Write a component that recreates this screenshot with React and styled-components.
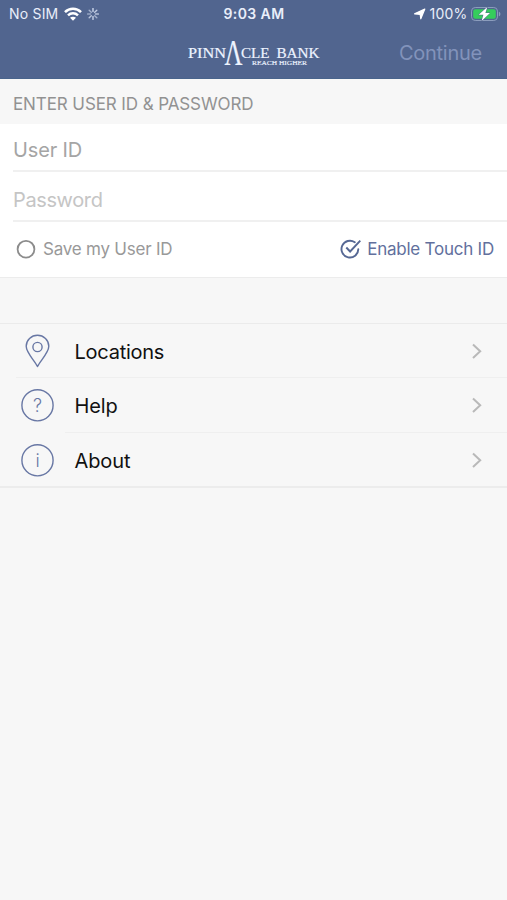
import React from "react";
import styled, { createGlobalStyle } from "styled-components";

const GlobalStyle = createGlobalStyle`
  * {
    box-sizing: border-box;
  }

  body {
    margin: 0;
    background-color: #f7f7f7;
    font-family: Inter, "Liberation Sans", sans-serif;
  }
`;

const Screen = styled.div`
  display: flex;
  flex-direction: column;
  width: 100%;
  height: 900px;
  background-color: #f7f7f7;
  overflow: hidden;
`;

const Header = styled.header`
  height: 79px;
  background-color: #51658f;
  border-bottom: 1px solid #49648c;
  color: #ffffff;
`;

const StatusBar = styled.div`
  display: grid;
  grid-template-columns: 1fr auto 1fr;
  align-items: center;
  height: 27px;
  padding: 0 6px 0 9px;
  font-size: 14px;
  line-height: 27px;
  letter-spacing: 0.2px;
  color: #e9eefa;
`;

const StatusGroup = styled.div`
  display: flex;
  align-items: center;
  justify-content: ${(props) => (props.$end ? "flex-end" : "flex-start")};
  gap: ${(props) => props.$gap};
`;

const Time = styled.span`
  margin-right: 2px;
  font-size: 14px;
  font-weight: 600;
  letter-spacing: 0.4px;
`;

const NavBar = styled.div`
  display: grid;
  grid-template-columns: 1fr auto 1fr;
  align-items: center;
  height: 51px;
  padding-right: 25px;
  padding-left: 25px;
`;

const Continue = styled.button`
  justify-self: end;
  border: 0;
  padding: 0;
  background: none;
  font-family: inherit;
  font-size: 20px;
  line-height: 24px;
  letter-spacing: ${(props) => props.$spacing};
  color: #8293bb;
`;

const SectionTitle = styled.h2`
  height: 45px;
  margin: 0;
  padding: 3px 0 0 13px;
  font-size: 17px;
  font-weight: 400;
  line-height: 44px;
  letter-spacing: -0.1px;
  color: #929292;
`;

const Form = styled.form`
  height: 154px;
  background-color: #ffffff;
  border-bottom: 1px solid #ececec;
`;

const Field = styled.label`
  display: flex;
  align-items: center;
  height: ${(props) => props.$height};
  margin-left: 13px;
  padding-top: ${(props) => props.$top};
  border-bottom: 2px solid #f0f0f0;
  font-size: 20px;
  line-height: 24px;
  letter-spacing: ${(props) => props.$spacing};
  color: ${(props) => props.$color};
`;

const Options = styled.div`
  display: flex;
  align-items: center;
  justify-content: space-between;
  height: 54px;
  padding: 0 13px 0 16px;
`;

const Option = styled.div`
  display: flex;
  align-items: center;
  gap: ${(props) => props.$gap};
  font-size: 17px;
  line-height: 20px;
  letter-spacing: ${(props) => props.$spacing};
  color: ${(props) => props.$color};
`;

const Menu = styled.nav`
  margin-top: 45px;
  border-top: 1px solid #ebebeb;
  border-bottom: 2px solid #ececec;
`;

const MenuItem = styled.div`
  display: flex;
  align-items: center;
  height: ${(props) => props.$height};
  padding: 0 25px 0 20px;
`;

const Divider = styled.div`
  height: 1px;
  margin-left: ${(props) => props.$inset};
  background-color: #efefef;
`;

const MenuLabel = styled.span`
  flex: 1;
  margin-left: 19.5px;
  padding-top: 2px;
  font-size: 20px;
  line-height: 24px;
  letter-spacing: ${(props) => props.$spacing};
  color: #111111;
`;

const IconText = styled.text`
  font-family: Inter, "Liberation Sans", sans-serif;
  font-size: 18px;
  font-weight: 300;
  fill: #6877a4;
  text-anchor: middle;
`;

const LogoText = styled.text`
  font-family: "Liberation Serif", serif;
  font-size: ${(props) => props.$size};
  fill: #edf3ff;
  stroke: #edf3ff;
  stroke-width: ${(props) => props.$stroke || "0.2px"};
`;

const Wifi = () => (
  <svg width="18" height="14" viewBox="0 0 18 14" fill="none" stroke="#fff">
    <path d="M1 5.1C5.5.7 12.5.7 17 5.1" strokeWidth="2.6" />
    <path d="M4 8.3c2.8-2.7 7.2-2.7 10 0" strokeWidth="2.5" />
    <path d="M9 13.7 6 10.8c1.7-1.5 4.3-1.5 6 0z" fill="#fff" stroke="none" />
  </svg>
);

const Spinner = () => (
  <svg width="12" height="12" viewBox="0 0 12 12">
    {[0.9, 0.8, 0.7, 0.6, 0.85, 0.75, 0.5, 0.6].map((opacity, i) => (
      <path
        key={i}
        d="M6 .6v3"
        stroke="#dce5f7"
        strokeWidth="1.4"
        strokeLinecap="round"
        opacity={opacity}
        transform={`rotate(${i * 45} 6 6)`}
      />
    ))}
  </svg>
);

const LocationArrow = () => (
  <svg width="12" height="12" viewBox="0 0 12 12">
    <path d="M10.8 1 6.8 10.8 6.2 6.3.6 5.8z" fill="#fff" stroke="#fff" strokeWidth="1.2" strokeLinejoin="round" />
  </svg>
);

const Battery = () => (
  <svg width="30" height="16" viewBox="0 0 30 16">
    <rect x=".5" y="1.5" width="26" height="13" rx="3.7" fill="none" stroke="#8c9dbd" />
    <rect x="2.2" y="3.2" width="22.6" height="9.6" rx="2" fill="#35cd5c" />
    <path d="M27.9 5.7c2 .7 2 3.9 0 4.6z" fill="#8c9dbd" />
    <path d="M16.3 1 7.7 8.8h4.7L10.6 15l8.4-8h-4.6z" fill="#fff" stroke="#51658f" strokeWidth="1" paintOrder="stroke" />
  </svg>
);

const Logo = () => (
  <svg width="134" height="30" viewBox="187 38 134 30" overflow="visible">
    <LogoText $size="15px" x="188" y="58" textLength="38" lengthAdjust="spacingAndGlyphs">PINN</LogoText>
    <LogoText $size="36px" x="224.5" y="64.5" textLength="18" lengthAdjust="spacingAndGlyphs">Λ</LogoText>
    <LogoText $size="15px" x="241" y="58" textLength="28.5" lengthAdjust="spacingAndGlyphs">CLE</LogoText>
    <LogoText $size="15px" x="276.5" y="58" textLength="43" lengthAdjust="spacingAndGlyphs">BANK</LogoText>
    <LogoText $size="6.3px" $stroke="0.15px" x="252" y="65" textLength="55" lengthAdjust="spacingAndGlyphs">REACH HIGHER</LogoText>
  </svg>
);

const Unchecked = () => (
  <svg width="20" height="20" viewBox="0 0 20 20">
    <circle cx="10" cy="10.2" r="8.4" fill="none" stroke="#8c8c8c" strokeWidth="1.8" />
  </svg>
);

const Checked = () => (
  <svg width="21" height="21" viewBox="0 0 21 21" fill="none" stroke="#566894" strokeWidth="1.9">
    <path d="M14.8 3.3A8.4 8.4 0 1 0 18.3 10.2" strokeLinecap="round" />
    <path d="m6.3 8.5 3.8 4L20.3 1.7" />
  </svg>
);

const Pin = () => (
  <svg width="35" height="36" viewBox="0 0 35 36" fill="none" stroke="#6877a4" strokeWidth="1.4">
    <path d="M17.5 33.5C14.5 27.5 6.2 19.5 6.2 13.2a11.3 11 0 0 1 22.6 0c0 6.3-8.3 14.3-11.3 20.3z" strokeLinejoin="round" />
    <circle cx="17.5" cy="14" r="4.6" />
  </svg>
);

const CircleIcon = ({ children }) => (
  <svg width="35" height="36" viewBox="0 0 35 36">
    <circle cx="17.5" cy="18.3" r="15.6" fill="none" stroke="#6877a4" strokeWidth="1.4" />
    <IconText x="17.5" y="25">{children}</IconText>
  </svg>
);

const Chevron = () => (
  <svg width="10" height="16" viewBox="0 0 10 16">
    <path d="m1 1.4 7.2 6.8L1 15" fill="none" stroke="#b9b9b9" strokeWidth="2" />
  </svg>
);

const App = () => {
  return (
    <Screen>
      <GlobalStyle />
      <Header>
        <StatusBar>
          <StatusGroup $gap="5.5px">
            <span>No SIM</span>
            <Wifi />
            <Spinner />
          </StatusGroup>
          <Time>9:03 AM</Time>
          <StatusGroup $gap="3.5px" $end>
            <LocationArrow />
            <span>100%</span>
            <Battery />
          </StatusGroup>
        </StatusBar>
        <NavBar>
          <span />
          <Logo />
          <Continue type="button" $spacing="-0.25px">Continue</Continue>
        </NavBar>
      </Header>

      <SectionTitle>ENTER USER ID &amp; PASSWORD</SectionTitle>
      <Form>
        <Field $height="48px" $top="5px" $color="#a5a5a5" $spacing="-0.15px">User ID</Field>
        <Field $height="50px" $top="7px" $color="#c5c5c5" $spacing="-0.38px">Password</Field>
        <Options>
          <Option $gap="7px" $color="#999999" $spacing="-0.22px">
            <Unchecked />
            <span>Save my User ID</span>
          </Option>
          <Option $gap="6px" $color="#62709d" $spacing="-0.23px">
            <Checked />
            <span>Enable Touch ID</span>
          </Option>
        </Options>
      </Form>

      <Menu>
        <MenuItem $height="53px">
          <Pin />
          <MenuLabel $spacing="-0.25px">Locations</MenuLabel>
          <Chevron />
        </MenuItem>
        <Divider $inset="16px" />
        <MenuItem $height="54px">
          <CircleIcon>?</CircleIcon>
          <MenuLabel $spacing="-0.1px">Help</MenuLabel>
          <Chevron />
        </MenuItem>
        <Divider $inset="65px" />
        <MenuItem $height="53px">
          <CircleIcon>i</CircleIcon>
          <MenuLabel $spacing="-0.1px">About</MenuLabel>
          <Chevron />
        </MenuItem>
      </Menu>
    </Screen>
  );
};

export default App;
